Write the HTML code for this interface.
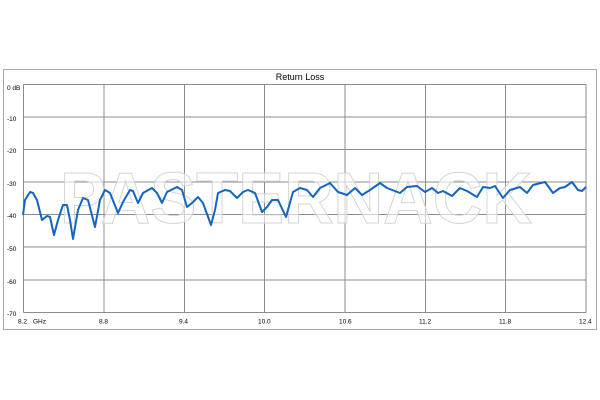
<!DOCTYPE html>
<html><head><style>html,body{margin:0;padding:0;background:#fff;width:600px;height:400px;overflow:hidden}</style></head>
<body>
<svg width="600" height="400" viewBox="0 0 600 400" xmlns="http://www.w3.org/2000/svg" font-family="Liberation Sans, sans-serif">
<rect x="3.5" y="69.5" width="593" height="260" fill="#fff" stroke="#a6a6a6" stroke-width="1"/>
<text x="300" y="80" font-size="9" text-anchor="middle" fill="#000">Return Loss</text>
<g stroke="#8c8c8c" stroke-width="1" fill="none">
<line x1="23.5" y1="84" x2="23.5" y2="312.5"/>
<line x1="104" y1="84" x2="104" y2="312.5"/>
<line x1="184.5" y1="84" x2="184.5" y2="312.5"/>
<line x1="264.5" y1="84" x2="264.5" y2="312.5"/>
<line x1="345" y1="84" x2="345" y2="312.5"/>
<line x1="425.5" y1="84" x2="425.5" y2="312.5"/>
<line x1="505.5" y1="84" x2="505.5" y2="312.5"/>
<line x1="586" y1="84" x2="586" y2="312.5"/>
<line x1="23.5" y1="84.5" x2="586" y2="84.5"/>
<line x1="23.5" y1="117" x2="586" y2="117"/>
<line x1="23.5" y1="149.5" x2="586" y2="149.5"/>
<line x1="23.5" y1="182" x2="586" y2="182"/>
<line x1="23.5" y1="214.5" x2="586" y2="214.5"/>
<line x1="23.5" y1="247" x2="586" y2="247"/>
<line x1="23.5" y1="280" x2="586" y2="280"/>
<line x1="23.5" y1="312.5" x2="586" y2="312.5"/>
</g>
<text x="60" y="223" font-size="72" font-weight="bold" textLength="472" lengthAdjust="spacingAndGlyphs" fill="#fff" fill-opacity="0.6" stroke="#d4d4d4" stroke-width="1">PASTERNACK</text>
<polyline fill="none" stroke="#1464c0" stroke-width="2" stroke-linejoin="round" points="23,215 25,200 30,192 33,193 37,200 42,220 47,216 50,217 54,235 58,220 63,205 67,205 70,220 73,239 78,210 83,198 88,200 95,227 100,200 105,190 110,193 118,213 123,202 130,190 133,191 138,203 143,193 152,188 157,193 162,203 167,192 177,187 182,190 187,207 192,203 198,197 203,203 211,225 215,210 218,193 225,190 230,191 237,198 243,192 248,190 255,193 262,212 267,207 272,200 278,200 286,217 293,192 300,188 307,190 313,197 320,188 330,183 338,192 347,195 355,188 362,195 370,190 380,183 387,188 400,193 407,187 417,186 425,192 432,188 438,193 443,191 452,196 460,188 467,191 477,197 483,187 490,188 495,186 503,198 510,190 520,187 527,193 533,185 545,182 553,193 560,188 565,187 572,182 578,190 582,191 586,187"/>
<g font-size="6.5" fill="#000">
<text x="7" y="90">0 dB</text>
<text x="7" y="121">-10</text>
<text x="7" y="153">-20</text>
<text x="7" y="186">-30</text>
<text x="7" y="218">-40</text>
<text x="7" y="251">-50</text>
<text x="7" y="284">-60</text>
<text x="7" y="316">-70</text>
<text x="18" y="323.5">8.2</text>
<text x="33" y="323.5">GHz</text>
<text x="99" y="323.5">8.8</text>
<text x="179" y="323.5">9.4</text>
<text x="258" y="323.5">10.0</text>
<text x="339" y="323.5">10.6</text>
<text x="419" y="323.5">11.2</text>
<text x="499" y="323.5">11.8</text>
<text x="579" y="323.5">12.4</text>
</g>
</svg>
</body></html>
